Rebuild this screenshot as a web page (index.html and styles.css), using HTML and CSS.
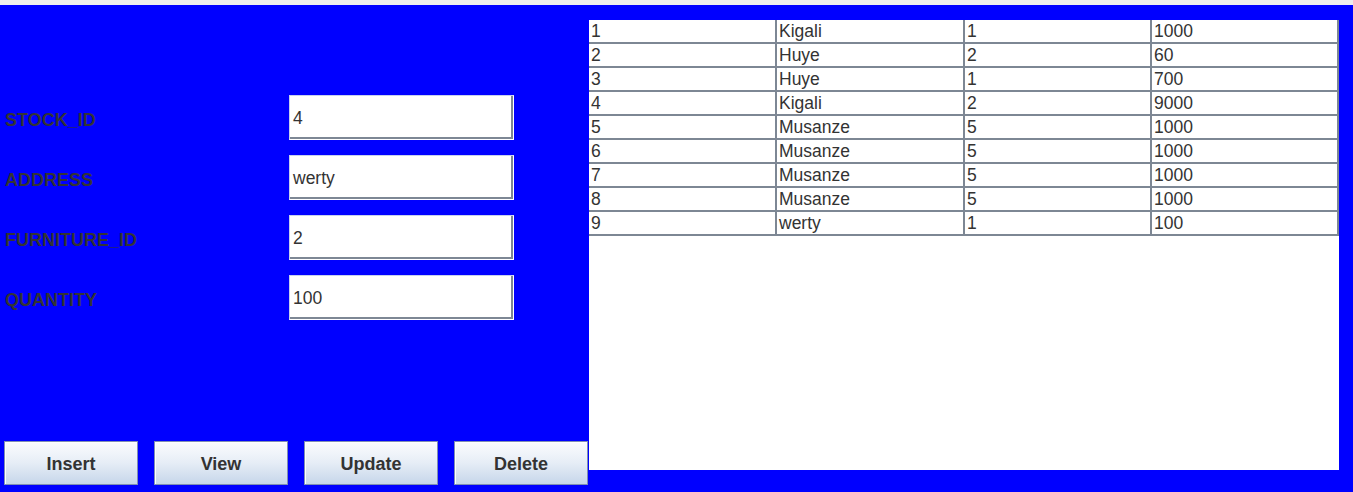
FILE: index.html
```html
<!DOCTYPE html>
<html>
<head>
<meta charset="utf-8">
<link rel="stylesheet" href="styles.css">
</head>
<body>
<div class="topbar"></div>
<div class="app">
  <div class="left">
    <div class="form">
      <label class="lbl">STOCK_ID</label>
      <div class="field">4</div>
      <label class="lbl">ADDRESS</label>
      <div class="field">werty</div>
      <label class="lbl">FURNITURE_ID</label>
      <div class="field">2</div>
      <label class="lbl">QUANTITY</label>
      <div class="field">100</div>
    </div>
    <div class="buttons">
      <button class="btn">Insert</button>
      <button class="btn">View</button>
      <button class="btn">Update</button>
      <button class="btn">Delete</button>
    </div>
  </div>
  <div class="right">
    <div class="tablewrap">
      <table class="grid">
        <colgroup><col class="c1"><col class="c2"><col class="c3"><col class="c4"></colgroup>
        <tbody>
          <tr><td>1</td><td>Kigali</td><td>1</td><td>1000</td></tr>
          <tr><td>2</td><td>Huye</td><td>2</td><td>60</td></tr>
          <tr><td>3</td><td>Huye</td><td>1</td><td>700</td></tr>
          <tr><td>4</td><td>Kigali</td><td>2</td><td>9000</td></tr>
          <tr><td>5</td><td>Musanze</td><td>5</td><td>1000</td></tr>
          <tr><td>6</td><td>Musanze</td><td>5</td><td>1000</td></tr>
          <tr><td>7</td><td>Musanze</td><td>5</td><td>1000</td></tr>
          <tr><td>8</td><td>Musanze</td><td>5</td><td>1000</td></tr>
          <tr><td>9</td><td>werty</td><td>1</td><td>100</td></tr>
        </tbody>
      </table>
    </div>
  </div>
</div>
</body>
</html>
```
FILE: styles.css
```css
html, body {
  margin: 0;
  padding: 0;
  background: #0000ff;
  font-family: "Liberation Sans", Arial, sans-serif;
  overflow: hidden;
}
.topbar {
  height: 5px;
  background: #eeeeee;
}
.app {
  display: flex;
  height: 487px;
  background: #0000ff;
}
.left {
  width: 589px;
  flex: none;
  display: flex;
  flex-direction: column;
  padding: 90px 0 7px 4px;
  box-sizing: border-box;
}
.form {
  display: grid;
  grid-template-columns: 285px 225px;
  grid-auto-rows: 45px;
  row-gap: 15px;
  align-items: center;
}
.lbl {
  font-weight: bold;
  font-size: 18px;
  color: #343434;
  padding-top: 5px;
  padding-left: 1px;
}
.field {
  height: 45px;
  box-sizing: border-box;
  background: #ffffff;
  border: 1px solid #c6cfee;
  border-right-color: #ffffff;
  border-bottom-color: #ffffff;
  box-shadow: inset -2px -2px 0 #7d8794;
  padding: 2px 0 0 3px;
  font-size: 17.5px;
  color: #333333;
  display: flex;
  align-items: center;
}
.buttons {
  margin-top: auto;
  display: flex;
  gap: 16px;
}
.btn {
  width: 134px;
  height: 44px;
  box-sizing: border-box;
  border: 1px solid #7f8fb3;
  background: linear-gradient(#fbfcfe, #e6edf6 50%, #c6d6ea);
  box-shadow: inset 1px 1px 0 #ffffff;
  font-family: "Liberation Sans", Arial, sans-serif;
  font-weight: bold;
  font-size: 18px;
  color: #333333;
  padding: 2px 0 0 0;
  margin: 0;
}
.right {
  padding-top: 15px;
}
.tablewrap {
  width: 750px;
  height: 450px;
  background: #ffffff;
}
.grid {
  table-layout: fixed;
  width: 750px;
  border-collapse: separate;
  border-spacing: 0;
}
.c1 { width: 188px; }
.c2 { width: 188px; }
.c3 { width: 187px; }
.c4 { width: 187px; }
.grid td {
  height: 21px;
  padding: 1px 0 0 2px;
  border-right: 2px solid #7d8794;
  border-bottom: 2px solid #7d8794;
  font-size: 17.5px;
  line-height: 21px;
  color: #333333;
  white-space: nowrap;
  overflow: hidden;
}
```
